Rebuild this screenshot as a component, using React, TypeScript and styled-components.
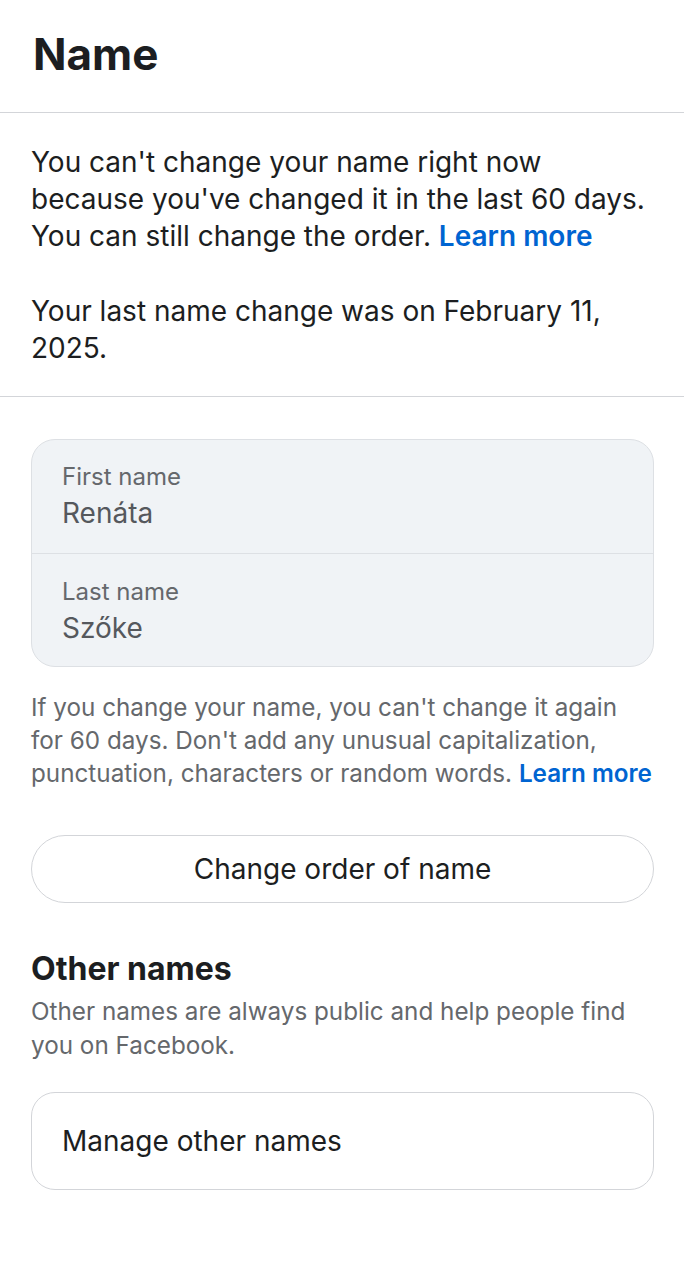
import React from "react";
import styled, { createGlobalStyle } from "styled-components";

const Global = createGlobalStyle`
  html, body { margin: 0; padding: 0; background: #ffffff; }
  body { font-family: Inter, Roboto, "Noto Sans", Arial, sans-serif; color: #1c1e21; -webkit-font-smoothing: antialiased; }
  * { box-sizing: border-box; }
`;

const Page = styled.div`
  width: 684px;
  min-height: 1280px;
  background: #ffffff;
  display: flex;
  flex-direction: column;
`;

const Header = styled.header`
  height: 113px;
  padding: 24px 33px 0;
  border-bottom: 1px solid #d3d5d9;
`;

const Title = styled.h1`
  margin: 0;
  font-size: 44px;
  line-height: 60px;
  font-weight: 700;
  color: #1c1e21;
`;

const Notice = styled.section`
  padding: 31px 31px 29px;
  border-bottom: 1px solid #d3d5d9;
  display: flex;
  flex-direction: column;
  gap: 38px;
`;

const NoticeText = styled.p`
  margin: 0;
  font-size: 28px;
  line-height: 37px;
  color: #1c1e21;
`;

const Link = styled.a`
  color: #0064d1;
  font-weight: 600;
  text-decoration: none;
`;

const Main = styled.main`
  padding: 42px 30px 0 31px;
  display: flex;
  flex-direction: column;
`;

const FieldCard = styled.div`
  background: #f0f3f6;
  border: 1px solid #dde0e4;
  border-radius: 24px;
  overflow: hidden;
`;

const Field = styled.div`
  padding: 22px 30px 18px;
  height: 113px;
  & + & { border-top: 1px solid #dde0e4; padding-top: 23px; }
`;

const FieldLabel = styled.div`
  font-size: 24px;
  line-height: 30px;
  color: #65686c;
`;

const FieldValue = styled.div`
  font-size: 28px;
  line-height: 42px;
  color: #55585d;
`;

const Helper = styled.p`
  margin: 24px 0 0;
  font-size: 24.25px;
  line-height: 33px;
  color: #65686c;
`;

const PillButton = styled.button`
  margin-top: 45px;
  height: 68px;
  width: 100%;
  border-radius: 34px;
  border: 1px solid #d3d5d9;
  background: #ffffff;
  font-family: inherit;
  font-size: 28px;
  color: #1c1e21;
`;

const SectionTitle = styled.h2`
  margin: 46px 0 0;
  font-size: 32px;
  line-height: 40px;
  font-weight: 700;
  color: #1c1e21;
`;

const SectionDesc = styled.p`
  margin: 6px 0 0;
  font-size: 24.25px;
  line-height: 34px;
  color: #65686c;
`;

const RowBox = styled.div`
  margin-top: 29px;
  height: 98px;
  border: 1px solid #d3d5d9;
  border-radius: 24px;
  display: flex;
  align-items: center;
  padding: 0 30px;
  font-size: 28px;
  color: #1c1e21;
`;

export default function App() {
  return (
    <Page>
      <Global />
      <Header>
        <Title>Name</Title>
      </Header>
      <Notice>
        <NoticeText>
          You can't change your name right now because you've changed it in the last 60 days.
          You can still change the order. <Link href="#">Learn more</Link>
        </NoticeText>
        <NoticeText>Your last name change was on February 11, 2025.</NoticeText>
      </Notice>
      <Main>
        <FieldCard>
          <Field>
            <FieldLabel>First name</FieldLabel>
            <FieldValue>Renáta</FieldValue>
          </Field>
          <Field>
            <FieldLabel>Last name</FieldLabel>
            <FieldValue>Szőke</FieldValue>
          </Field>
        </FieldCard>
        <Helper>
          If you change your name, you can't change it again for 60 days. Don't add any unusual
          capitalization, punctuation, characters or random words. <Link href="#">Learn more</Link>
        </Helper>
        <PillButton>Change order of name</PillButton>
        <SectionTitle>Other names</SectionTitle>
        <SectionDesc>Other names are always public and help people find you on Facebook.</SectionDesc>
        <RowBox>Manage other names</RowBox>
      </Main>
    </Page>
  );
}
